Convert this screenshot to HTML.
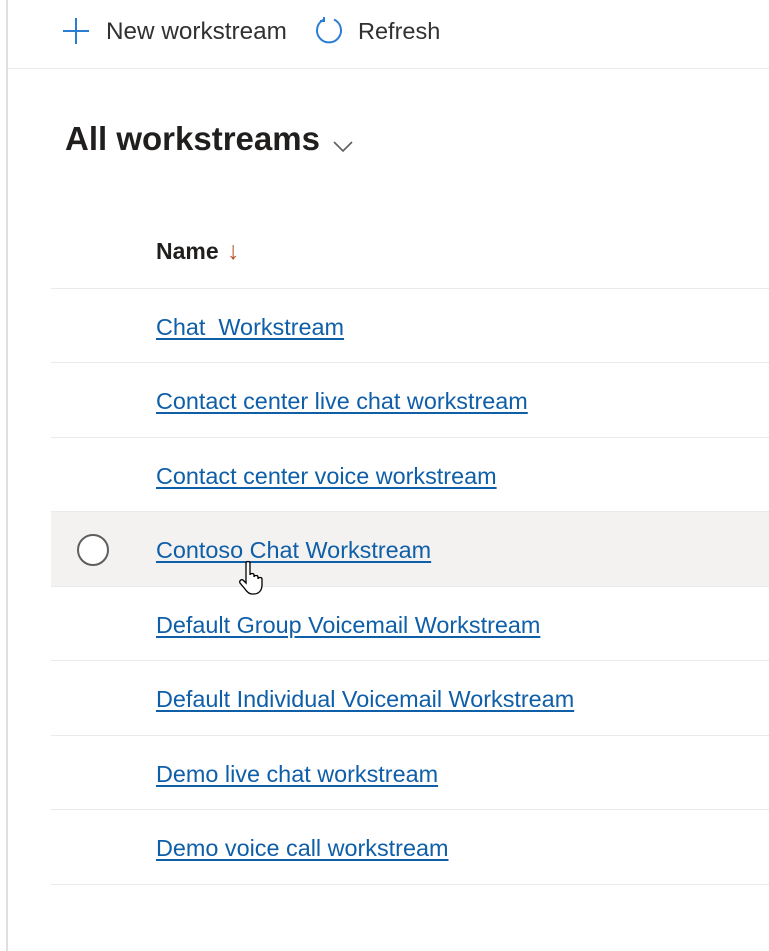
<!DOCTYPE html>
<html><head><style>
body{margin:0;width:769px;height:951px;background:#fff;font-family:"Liberation Sans",sans-serif;position:relative;overflow:hidden}
.lb{position:absolute;left:0;top:0;width:6px;height:951px;background:#fff;border-right:2px solid #e1dfdd}
.top{position:absolute;left:8px;right:0;top:0;height:68px;border-bottom:1px solid #edebe9}
.t{position:absolute;font-size:24.3px;color:#323130;top:18px}
h1{position:absolute;left:65px;top:120px;margin:0;font-size:33px;font-weight:bold;color:#201f1e}
.nm{position:absolute;left:156px;top:237px;font-size:23px;font-weight:bold;color:#201f1e}
.row{position:absolute;left:51px;right:0;height:74px;border-top:1px solid #edebe9}
.row a{position:absolute;left:105px;top:25px;font-size:23.4px;color:#0f5ea8;text-decoration:underline;text-underline-offset:3px}
</style></head><body>
<div class="lb"></div>
<div class="top">
<svg style="position:absolute;left:54px;top:17px" width="28" height="28"><path d="M14 1V27M1 14H27" stroke="#2b7cd3" stroke-width="2"/></svg>
<span class="t" style="left:98px">New workstream</span>
<svg style="position:absolute;left:306px;top:15px" width="30" height="30"><path d="M10 4.5A12 12 0 1 0 20 4.5" fill="none" stroke="#2b7cd3" stroke-width="2"/><path d="M10 2V6H6" fill="none" stroke="#2b7cd3" stroke-width="2"/></svg>
<span class="t" style="left:350px;font-size:23.5px">Refresh</span>
</div>
<h1>All workstreams</h1>
<svg style="position:absolute;left:333px;top:140px" width="22" height="14"><path d="M1 2L10 11L19 2" fill="none" stroke="#605e5c" stroke-width="1.6"/></svg>
<div class="nm">Name <span style="font-weight:normal;color:#b5562e;margin-left:2px;font-size:25px">↓</span></div>
<div class="row" style="top:288px"><a>Chat&nbsp; Workstream</a></div>
<div class="row" style="top:362px"><a>Contact center live chat workstream</a></div>
<div class="row" style="top:437px"><a>Contact center voice workstream</a></div>
<div class="row" style="top:511px;background:#f3f2f1;height:75px"><svg style="position:absolute;left:26px;top:22px" width="32" height="32"><circle cx="16" cy="16" r="15" fill="#fff" stroke="#605e5c" stroke-width="2"/></svg><a>Contoso Chat Workstream</a></div>
<div class="row" style="top:586px"><a>Default Group Voicemail Workstream</a></div>
<div class="row" style="top:660px"><a>Default Individual Voicemail Workstream</a></div>
<div class="row" style="top:735px"><a>Demo live chat workstream</a></div>
<div class="row" style="top:809px;border-bottom:1px solid #edebe9"><a>Demo voice call workstream</a></div>
<svg style="position:absolute;left:238px;top:560px" width="30" height="36"><path d="M8 3c0-2 4-2 4 0v12c0-2 4-2 4 0v2c0-2 4-2 4 0v2c0-2 4-2 4 0v6c0 5-3 9-8 9h-2c-3 0-5-2-7-5l-5-6c-1-2 1-4 3-3l3 3z" fill="#fff" stroke="#000" stroke-width="1.3"/></svg>
</body></html>
